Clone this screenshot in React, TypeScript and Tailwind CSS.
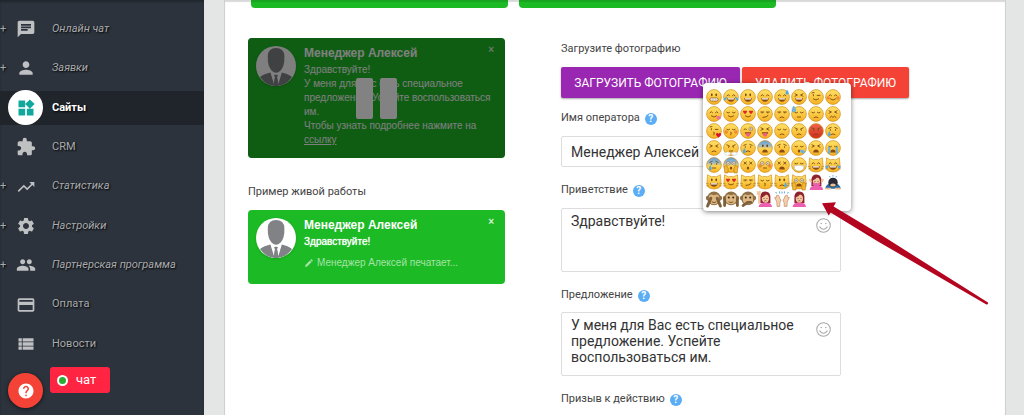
import { useState } from "react";
import type { ReactNode } from "react";
import type { IconType } from "react-icons";
import {
  MdChat,
  MdEdit,
  MdExtension,
  MdHelp,
  MdPayment,
  MdPeople,
  MdPerson,
  MdSettings,
  MdTrendingUp,
  MdViewList,
  MdWidgets,
} from "react-icons/md";

interface MenuItem {
  label: string;
  icon: IconType;
  expandable?: boolean;
  active?: boolean;
}

const menu: MenuItem[] = [
  { label: "Онлайн чат", icon: MdChat, expandable: true },
  { label: "Заявки", icon: MdPerson, expandable: true },
  { label: "Сайты", icon: MdWidgets, active: true },
  { label: "CRM", icon: MdExtension },
  { label: "Статистика", icon: MdTrendingUp, expandable: true },
  { label: "Настройки", icon: MdSettings, expandable: true },
  { label: "Партнерская программа", icon: MdPeople, expandable: true },
  { label: "Оплата", icon: MdPayment },
  { label: "Новости", icon: MdViewList },
];

/* ---------- Emoji ---------- */

const ink = { fill: "none", stroke: "#7a4a12", strokeWidth: 0.9, strokeLinecap: "round" } as const;
const heart = "M0 2.2 L-2 0 Q-2.2 -1.6 -1 -1.6 Q-.2 -1.6 0 -.8 Q.2 -1.6 1 -1.6 Q2.2 -1.6 2 0Z";

const eyes: Record<string, ReactNode> = {
  dots: (
    <g fill="#6b3a08">
      <ellipse cx="5.8" cy="5.8" rx=".8" ry="1.4" />
      <ellipse cx="10.2" cy="5.8" rx=".8" ry="1.4" />
    </g>
  ),
  happy: <path {...ink} d="M4 6.6Q5.3 4.6 6.6 6.6M9.4 6.6Q10.7 4.6 12 6.6" />,
  closed: <path {...ink} d="M3.8 6.4Q5.2 7.8 6.6 6.4M9.4 6.4Q10.8 7.8 12.2 6.4" />,
  squint: <path {...ink} d="M4 4.8L6.4 6L4 7.2M12 4.8L9.6 6L12 7.2" />,
  wink: <path {...ink} d="M5.4 5.6V6.8M9.2 6.4H12M4 3.9L6 3.5" />,
  side: <path {...ink} d="M3.8 6H6.8M9.4 6H12.4M5.2 6.4V7M10.8 6.4V7" />,
  angry: <path {...ink} d="M3.8 4.8L6.6 6.2M12.2 4.8L9.4 6.2M5.6 6.8V7.4M10.4 6.8V7.4" />,
  sad: <path {...ink} d="M3.8 5.4L6.2 4.4M12.2 5.4L9.8 4.4M5.4 6.6V7.4M10.6 6.6V7.4" />,
  cross: <path {...ink} d="M4 5L6.4 7.2M6.4 5L4 7.2M9.6 5L12 7.2M12 5L9.6 7.2" />,
  hearts: (
    <g fill="#dc2626">
      <path d={heart} transform="translate(5 6)" />
      <path d={heart} transform="translate(11 6)" />
    </g>
  ),
  wide: (
    <g fill="#fff" stroke="#6b3a08" strokeWidth=".5">
      <circle cx="5.2" cy="6.4" r="1.8" />
      <circle cx="10.8" cy="6.4" r="1.8" />
      <circle cx="5.2" cy="6.4" r=".5" />
      <circle cx="10.8" cy="6.4" r=".5" />
    </g>
  ),
  goofy: (
    <g>
      <path {...ink} d="M4 6.4Q5.2 5 6.4 6.4" />
      <circle cx="10.9" cy="6" r="1.9" fill="#fff" stroke="#6b3a08" strokeWidth=".5" />
      <circle cx="10.9" cy="6" r=".7" fill="#6b3a08" />
    </g>
  ),
};

const mouths: Record<string, ReactNode> = {
  teeth: (
    <g>
      <rect x="4" y="9" width="8" height="3" rx="1.3" fill="#fff" stroke="#6b3a08" strokeWidth=".6" />
      <path d="M4 10.5H12M6.6 9V12M9.4 9V12" stroke="#b39a78" strokeWidth=".3" />
    </g>
  ),
  open: (
    <g>
      <path d="M4.2 9H11.8Q11.4 12.8 8 12.8Q4.6 12.8 4.2 9Z" fill="#8a4a14" />
      <path d="M4.8 9.2H11.2L10.8 10.6H5.2Z" fill="#fff" />
    </g>
  ),
  smile: <path {...ink} d="M5.4 10Q8 12.2 10.6 10" />,
  smirk: <path {...ink} d="M6 11.4Q9 11.6 11 9.6" />,
  frown: <path {...ink} d="M6 11.6Q8 9.8 10 11.6" />,
  flat: <path {...ink} d="M6.4 11H9.6" />,
  wavy: <path {...ink} d="M5 11.4L6.5 10.2L8 11.4L9.5 10.2L11 11.4" />,
  small: <ellipse cx="8" cy="11" rx="1.2" ry="1.5" fill="#8a4a14" />,
  wail: <path d="M5.2 12.4Q5.4 9.4 8 9.4Q10.6 9.4 10.8 12.4Z" fill="#8a4a14" />,
  kiss: <path {...ink} d="M7.6 9.2Q9.2 9.4 8 10.4Q9.2 11.2 7.6 11.8" />,
  tongue: (
    <g>
      <path d="M4.8 9.2H11.2Q10.8 12 8 12Q5.2 12 4.8 9.2Z" fill="#8a4a14" />
      <path d="M6.2 10H10V12.6Q8 14.8 6.2 12.6Z" fill="#ee5b83" />
    </g>
  ),
};

const extras: Record<string, ReactNode> = {
  tears: (
    <g fill="#53a9e6">
      <path d="M4.2 7.6Q3 12 .8 11.6Q-.4 9.6 4.2 7.6Z" />
      <path d="M11.8 7.6Q13 12 15.2 11.6Q16.4 9.6 11.8 7.6Z" />
    </g>
  ),
  streams: <path d="M4.2 7V13.8M11.8 7V13.8" stroke="#62b4e8" strokeWidth="2" fill="none" />,
  tear: <path d="M4.4 8Q7 12.8 4.2 13.4Q1.4 12.6 4.4 8Z" fill="#53a9e6" />,
  tearRight: <path d="M11.6 8Q14.2 12.8 11.4 13.4Q8.8 12.6 11.6 8Z" fill="#53a9e6" />,
  sweat: <path d="M13 .4Q16.2 5 13 5.6Q10.2 5 13 .4Z" fill="#53a9e6" />,
  drop: <path d="M2.6 0Q6.8 5.4 2.8 6.2Q-.8 5.2 2.6 0Z" fill="#6db9ea" stroke="#3c8dc4" strokeWidth=".4" />,
  blush: (
    <g fill="#f06d35" opacity=".7">
      <circle cx="3.2" cy="9" r="1.7" />
      <circle cx="12.8" cy="9" r="1.7" />
    </g>
  ),
  yum: <path d="M10.6 10Q15 9.4 14.6 12.2Q13 15 10.8 12.4Z" fill="#ee6f94" />,
  heart: <path d={heart} fill="#d7132b" transform="translate(12.6 12) scale(1.3)" />,
  steam: (
    <g fill="#fff" stroke="#b9c6ce" strokeWidth=".5">
      <ellipse cx="4.6" cy="13.6" rx="3" ry="1.7" />
      <ellipse cx="11.4" cy="13.6" rx="3" ry="1.7" />
    </g>
  ),
  snot: <path d="M9 9.8Q14.4 10 14 12.6Q12 14.6 9.6 12Z" fill="#62b4e8" />,
  mask: (
    <g>
      <path d="M3.4 9Q8 7.6 12.6 9V12Q8 16 3.4 12Z" fill="#fff" stroke="#b4bcc4" strokeWidth=".5" />
      <path d="M.8 8L3.4 9.4M15.2 8L12.6 9.4" stroke="#d5dade" strokeWidth=".7" />
    </g>
  ),
  hands: (
    <g fill="#f4b62c" stroke="#a86a10" strokeWidth=".5">
      <path d="M1 9.4L3.6 8.4L5.2 11.6L5 16H1.8Z" />
      <path d="M15 9.4L12.4 8.4L10.8 11.6L11 16H14.2Z" />
    </g>
  ),
};

type Base = "face" | "red" | "blue" | "cat";
type FaceSpec = [base: Base, eyes: string, mouth: string, extra?: string];
type FigureKind = "no" | "bow" | "see" | "hear" | "speak" | "raise" | "praise" | "pout";

const faces: FaceSpec[] = [
  ["face", "dots", "teeth"],
  ["face", "happy", "open", "tears"],
  ["face", "dots", "open"],
  ["face", "happy", "open"],
  ["face", "happy", "open", "sweat"],
  ["face", "squint", "open"],
  ["face", "wink", "smile"],
  ["face", "happy", "smile", "blush"],

  ["face", "happy", "smile", "yum"],
  ["face", "closed", "smile"],
  ["face", "hearts", "smile"],
  ["face", "side", "smirk"],
  ["face", "side", "frown"],
  ["face", "closed", "flat", "drop"],
  ["face", "closed", "frown"],
  ["face", "squint", "wavy"],

  ["face", "wink", "kiss", "heart"],
  ["face", "closed", "kiss", "blush"],
  ["face", "goofy", "tongue"],
  ["face", "squint", "tongue"],
  ["face", "closed", "frown"],
  ["face", "angry", "frown"],
  ["red", "angry", "frown"],
  ["face", "sad", "frown", "tear"],

  ["face", "squint", "frown"],
  ["face", "angry", "flat", "steam"],
  ["face", "sad", "frown", "tear"],
  ["blue", "dots", "wail"],
  ["face", "sad", "wail"],
  ["face", "closed", "small", "snot"],
  ["face", "squint", "wail"],
  ["face", "closed", "wail", "streams"],

  ["blue", "sad", "flat", "tear"],
  ["blue", "wide", "small", "hands"],
  ["face", "cross", "small"],
  ["face", "wide", "flat", "blush"],
  ["face", "cross", "wail"],
  ["face", "closed", "flat", "mask"],
  ["cat", "happy", "open"],
  ["cat", "happy", "open", "tears"],

  ["cat", "dots", "open"],
  ["cat", "hearts", "smile"],
  ["cat", "side", "smirk"],
  ["cat", "closed", "kiss"],
  ["cat", "dots", "frown", "tearRight"],
  ["cat", "wide", "wail", "hands"],
];

const figures: FigureKind[] = ["no", "bow", "see", "hear", "speak", "raise", "praise", "pout"];

function FaceEmoji({ spec }: { spec: FaceSpec }) {
  const [base, eye, mouth, extra] = spec;
  const top = base === "red" ? "#f0674a" : base === "blue" ? "#5f9fe0" : "#ffe268";
  const bottom = base === "red" ? "#cf2a1c" : "#f6b022";
  const id = `tone-${base}`;
  return (
    <svg viewBox="0 0 16 16" className="size-4 overflow-visible" aria-hidden="true">
      <defs>
        <linearGradient id={id} x1="0" y1="0" x2="0" y2="1">
          <stop offset="0" stopColor={top} />
          {base === "blue" && <stop offset=".35" stopColor="#9cb9c4" />}
          {base === "blue" && <stop offset=".55" stopColor="#ffd550" />}
          <stop offset="1" stopColor={bottom} />
        </linearGradient>
      </defs>
      {base === "cat" ? (
        <path
          d="M1.6 .8L5.4 2.8Q8 2 10.6 2.8L14.4 .8L15 7.4Q16.4 14.8 8 15Q-.4 14.8 1 7.4Z"
          fill={`url(#${id})`}
          stroke="#c98612"
          strokeWidth=".6"
        />
      ) : (
        <circle cx="8" cy="8" r="7.4" fill={`url(#${id})`} stroke="#cf8f1c" strokeWidth=".7" />
      )}
      {eyes[eye]}
      {mouths[mouth]}
      {base === "cat" && <path d="M0 9.4L3 9.8M0 12L3 11.4M16 9.4L13 9.8M16 12L13 11.4" stroke="#9a6417" strokeWidth=".4" />}
      {extra && extras[extra]}
    </svg>
  );
}

function FigureEmoji({ kind }: { kind: FigureKind }) {
  const monkey = kind === "see" || kind === "hear" || kind === "speak";
  const woman = kind === "no" || kind === "raise" || kind === "pout";
  return (
    <svg viewBox="0 0 16 16" className="size-4 overflow-visible" aria-hidden="true">
      {monkey && (
        <g>
          <g fill="#8f7047">
            <circle cx="2" cy="7" r="2.2" />
            <circle cx="14" cy="7" r="2.2" />
            <circle cx="8" cy="7.4" r="6.8" />
          </g>
          <path d="M8 4.2Q13.4 1.8 13 7Q14 13 8 13.2Q2 13 3 7Q2.6 1.8 8 4.2Z" fill="#dcb783" />
          {kind !== "see" && (
            <g fill="#3c2814">
              <circle cx="5.8" cy="6.6" r="1" />
              <circle cx="10.2" cy="6.6" r="1" />
            </g>
          )}
          {kind !== "speak" && <path d="M6 11Q8 12.4 10 11" {...ink} />}
          {kind === "see" && <path d="M1.6 15L4.8 7.2M14.4 15L11.2 7.2" stroke="#7d6039" strokeWidth="3" strokeLinecap="round" />}
          {kind === "hear" && <path d="M1.6 14.6V7.6M14.4 14.6V7.6" stroke="#7d6039" strokeWidth="2.8" strokeLinecap="round" />}
          {kind === "speak" && <path d="M3 14.6L7.6 11.4H10.8" fill="none" stroke="#7d6039" strokeWidth="2.6" strokeLinecap="round" />}
        </g>
      )}
      {woman && (
        <g>
          <path d="M3.4 12V5.4Q4 .4 8.4 .4Q13 .6 13.4 5.4V12Z" fill="#8e2430" />
          <path d="M1.6 16Q2 11.6 8.4 11.6Q14.8 11.6 15 16Z" fill="#ec5fae" />
          <ellipse cx="8.4" cy="7.6" rx="3.6" ry="4.2" fill="#f4c6a0" />
          <path d="M4.6 6.4Q8 5.6 9.4 2.8Q12 4 12.2 6.6Q13 1.4 8.4 1.4Q4.4 1.6 4.6 6.4Z" fill="#8e2430" />
          <path d="M7 7V8M10 7V8M7.4 10Q8.4 9.4 9.4 10" stroke="#5c2c20" strokeWidth=".7" fill="none" />
          {kind === "no" && (
            <g>
              <path d="M3 15L12 9.4M14 15L5 9.4" stroke="#ec5fae" strokeWidth="2.6" />
              <path d="M13.6 8.4L15.4 5M3.2 8.4L1.4 5" stroke="#f4c6a0" strokeWidth="1.7" />
            </g>
          )}
          {kind === "raise" && <path d="M2 12V2.4M.8 3V.8M2.8 3V.6" stroke="#f4c6a0" strokeWidth="1.8" strokeLinecap="round" />}
        </g>
      )}
      {kind === "bow" && (
        <g>
          <path d="M.2 14.8Q1 9 8 9Q15 9 15.8 14.8Z" fill="#2b6ba5" />
          <circle cx="8" cy="8.4" r="4.7" fill="#292a36" />
          <ellipse cx="8" cy="11" rx="2.8" ry="1.6" fill="#eabf96" />
          <path d="M4.6 2L5 3.4M8 1V2.6M11.4 2L11 3.4" stroke="#55a5db" strokeWidth=".9" />
          <path d="M1 14.6H5.4M10.6 14.6H15" stroke="#eabf96" strokeWidth="1.6" strokeLinecap="round" />
        </g>
      )}
      {kind === "praise" && (
        <g>
          <path d="M3 15.4L2.8 11L.6 6.4L2 6.8L2.6 4.4L4 4.2L5 5L6 8L7 9L5.8 12V15.4Z" fill="#f4cfae" stroke="#b98056" strokeWidth=".6" />
          <path d="M13 15.4L13.2 11L15.4 6.4L14 6.8L13.4 4.4L12 4.2L11 5L10 8L9 9L10.2 12V15.4Z" fill="#f4cfae" stroke="#b98056" strokeWidth=".6" />
          <path d="M2.4 2.6L1.8 1M5.6 2.4V.4M8 2.6V.6M10.4 2.4V.4M13.6 2.6L14.2 1" stroke="#4b9cd3" strokeWidth=".9" />
        </g>
      )}
    </svg>
  );
}

function EmojiPicker() {
  return (
    <div className="absolute -right-2.5 bottom-[61px] z-10 w-[148px] rounded bg-white pt-[5px] pb-1 pl-[2px] shadow-[0_1px_5px_rgba(0,0,0,0.5)]">
      <div className="grid w-max grid-cols-8">
        {faces.map((spec, i) => (
          <button key={i} type="button" aria-label={`Смайл ${i + 1}`} className="flex size-[17px] items-center justify-center">
            <FaceEmoji spec={spec} />
          </button>
        ))}
        {figures.map((kind) => (
          <button key={kind} type="button" aria-label={kind} className="flex size-[17px] items-center justify-center">
            <FigureEmoji kind={kind} />
          </button>
        ))}
      </div>
    </div>
  );
}

/* ---------- Sidebar ---------- */

function Sidebar() {
  return (
    <aside className="relative w-[204px] shrink-0 bg-[#2c333c] pt-3 shadow-[inset_0_2px_2px_rgba(0,0,0,0.25)]">
      <nav className="flex h-[349px] flex-col justify-between">
        {menu.map(({ label, icon: Icon, expandable, active }) => (
          <a
            key={label}
            href="#"
            className={`flex h-[34px] items-center text-[11px] [text-shadow:1px_1px_2px_#000] ${
              active ? "bg-[#20242b] font-bold text-white" : "text-[#a9abae]"
            }`}
          >
            <span className="w-2">{expandable && "+"}</span>
            <span
              className={`flex size-[35px] shrink-0 items-center justify-center rounded-full ${
                active ? "bg-white text-[#12a79d]" : "text-[#bfc0c2]"
              }`}
            >
              <Icon className="size-5" />
            </span>
            <span className={`ml-[9px] ${expandable ? "italic" : ""}`}>{label}</span>
          </a>
        ))}
      </nav>
      <button
        type="button"
        aria-label="Помощь"
        className="absolute top-[373px] left-2 flex size-[35px] items-center justify-center rounded-full bg-[#f44336] text-white shadow-[0_1px_4px_rgba(0,0,0,0.6)]"
      >
        <MdHelp className="size-[18px]" />
      </button>
      <button
        type="button"
        className="absolute top-[367px] left-[50px] flex h-[26px] w-[60px] items-center gap-2 rounded-[3px] bg-[#ff2442] pl-[7px] text-[13px] text-white"
      >
        <span className="size-[11px] rounded-full border-2 border-white bg-[#2bac35]" />
        чат
      </button>
    </aside>
  );
}

/* ---------- Widget previews ---------- */

function Avatar() {
  return (
    <svg viewBox="0 0 40 40" className="size-10 shrink-0 rounded-full bg-white shadow" aria-hidden="true">
      <g fill="#808285">
        <path d="M20 2Q28 2 28.4 10Q28.8 20 24.6 24.6Q20 29 15.6 24.6Q11.4 20 11.8 10Q12.2 2 20 2Z" />
        <path d="M14.4 26.6L18 38L19 31L17.8 29.4L20 28.4L22.2 29.4L21 31L22.4 38L25.8 26.6Q33 28.6 36 31Q30 40 20 40Q10 40 4 31Q7 28.6 14.4 26.6Z" />
        <path d="M19 31H21L22.4 40H17.6Z" />
      </g>
    </svg>
  );
}

function ChatCard({ paused, children }: { paused?: boolean; children: ReactNode }) {
  return (
    <div className="relative flex overflow-hidden rounded bg-[#1cba25] px-2 pt-2 font-['Liberation_Sans',sans-serif] text-white">
      <Avatar />
      <div className="ml-2 min-w-0 flex-1 text-[10px] leading-[14px]">
        <div className="text-[12px] font-bold">Менеджер Алексей</div>
        {children}
      </div>
      <button type="button" aria-label="Закрыть" className="absolute top-1.5 right-[11px] text-[10px] leading-3 font-bold opacity-80">
        ×
      </button>
      {paused && (
        <div className="absolute inset-0 flex items-center justify-center gap-[7px] bg-black/50">
          <span className="h-[41px] w-[17px] rounded-[2px] bg-[#828282]" />
          <span className="h-[41px] w-[17px] rounded-[2px] bg-[#828282]" />
        </div>
      )}
    </div>
  );
}

function Previews() {
  return (
    <section className="w-[257px] shrink-0">
      <ChatCard paused>
        <div className="h-[98px] pt-[3px]">
          Здравствуйте!
          <br />
          У меня для Вас есть специальное
          <br />
          предложение. Успейте воспользоваться им.
          <br />
          Чтобы узнать подробнее нажмите на
          <br />
          <a href="#" className="underline">
            ссылку
          </a>
        </div>
      </ChatCard>
      <h2 className="mt-[26px] mb-2.5 text-[11px] leading-4 text-[#444]">Пример живой работы</h2>
      <ChatCard>
        <div className="h-[52px] pt-[3px]">
          <div className="[text-shadow:0_0_1px_#fff]">Здравствуйте!</div>
          <div className="mt-[7px] flex items-center gap-[3px] text-[#a5e3a8]">
            <MdEdit className="size-2.5" />
            Менеджер Алексей печатает...
          </div>
        </div>
      </ChatCard>
    </section>
  );
}

/* ---------- Form ---------- */

function FieldLabel({ htmlFor, children }: { htmlFor?: string; children: ReactNode }) {
  return (
    <div className="flex h-4 items-center gap-[5px] text-[11px] leading-4 text-[#444]">
      <label htmlFor={htmlFor}>{children}</label>
      <span className="mt-0.5 flex size-3 items-center justify-center rounded-full bg-[#5badf5] text-[10px] leading-3 font-bold text-white">
        ?
      </span>
    </div>
  );
}

function SmileButton() {
  return (
    <button type="button" aria-label="Смайлы" className="absolute top-2.5 right-2.5">
      <svg viewBox="0 0 16 16" className="size-[15px]" fill="none" stroke="#a8a8a8" strokeWidth="1.1" aria-hidden="true">
        <circle cx="8" cy="8" r="7.2" />
        <path d="M4 9.4Q8 14.6 12 9.4" strokeLinecap="round" />
        <circle cx="5.5" cy="5.8" r=".8" fill="#a8a8a8" stroke="none" />
        <circle cx="10.5" cy="5.8" r=".8" fill="#a8a8a8" stroke="none" />
      </svg>
    </button>
  );
}

function OperatorForm() {
  const [name, setName] = useState("Менеджер Алексей");
  const [greeting, setGreeting] = useState("Здравствуйте!");
  const [offer, setOffer] = useState("У меня для Вас есть специальное предложение. Успейте воспользоваться им.");

  return (
    <form className="w-[280px] shrink-0 pt-[3px]">
      <div className="text-[11px] leading-4 text-[#444]">Загрузите фотографию</div>
      <div className="mt-2.5 flex w-max gap-[2px] text-[12px] leading-4 text-white">
        <button type="button" className="h-[31px] w-[179px] rounded-[2px] bg-[#9a27b1] shadow-[0_1px_2px_rgba(0,0,0,0.35)]">
          ЗАГРУЗИТЬ ФОТОГРАФИЮ
        </button>
        <button type="button" className="h-[31px] w-[167px] rounded-[2px] bg-[#f44336] shadow-[0_1px_2px_rgba(0,0,0,0.35)]">
          УДАЛИТЬ ФОТОГРАФИЮ
        </button>
      </div>

      <div className="mt-3">
        <FieldLabel htmlFor="operator-name">Имя оператора</FieldLabel>
        <input
          id="operator-name"
          value={name}
          onChange={(e) => setName(e.target.value)}
          className="mt-2.5 block h-[31px] w-full rounded-[2px] border border-[#ddd] bg-white px-[9px] text-[14px] text-[#333] outline-none"
        />
      </div>

      <div className="mt-[15px]">
        <FieldLabel htmlFor="greeting">Приветствие</FieldLabel>
        <div className="relative mt-2.5">
          <textarea
            id="greeting"
            value={greeting}
            onChange={(e) => setGreeting(e.target.value)}
            className="block h-16 w-full resize-none rounded-[2px] border border-[#ddd] bg-white py-1 pr-8 pl-[9px] text-[14px] leading-4 text-[#333] outline-none"
          />
          <SmileButton />
          <EmojiPicker />
        </div>
      </div>

      <div className="mt-[15px]">
        <FieldLabel htmlFor="offer">Предложение</FieldLabel>
        <div className="relative mt-[9px]">
          <textarea
            id="offer"
            value={offer}
            onChange={(e) => setOffer(e.target.value)}
            className="block h-16 w-full resize-none rounded-[2px] border border-[#ddd] bg-white py-1 pr-8 pl-[9px] text-[14px] leading-4 text-[#333] outline-none"
          />
          <SmileButton />
        </div>
      </div>

      <div className="mt-[15px]">
        <FieldLabel>Призыв к действию</FieldLabel>
      </div>
    </form>
  );
}

export default function App() {
  return (
    <div className="flex h-screen overflow-hidden bg-[#e4e6e5] font-['Roboto',sans-serif]">
      <Sidebar />
      <main className="relative mr-[18px] ml-5 min-w-0 flex-1 overflow-hidden border-x border-[#cfd0d0] bg-white shadow-[inset_0_2px_1px_rgba(0,0,0,0.15)]">
        <div className="flex gap-[11px] pl-[26px]">
          <div className="h-2 w-[257px] rounded-b bg-[#1cba25] shadow-[inset_0_2px_1px_rgba(0,0,0,0.12)]" />
          <div className="h-2 w-[257px] rounded-b bg-[#1cba25] shadow-[inset_0_2px_1px_rgba(0,0,0,0.12)]" />
        </div>
        <div className="flex gap-14 pt-[30px] pl-[23px]">
          <Previews />
          <OperatorForm />
        </div>
        {/* Pointer to the emoji picker */}
        <svg viewBox="0 0 168 105" className="absolute top-[202px] left-[597px] z-20 h-[105px] w-[168px]" aria-hidden="true">
          <path d="M0 1.3L14 .3L11.6 4.4L60 33.6L166 100.4Q166.6 102.6 164.4 102.6L56 39.4L8.6 10.6L6.7 13.6Z" fill="#b3051f" />
        </svg>
      </main>
    </div>
  );
}
